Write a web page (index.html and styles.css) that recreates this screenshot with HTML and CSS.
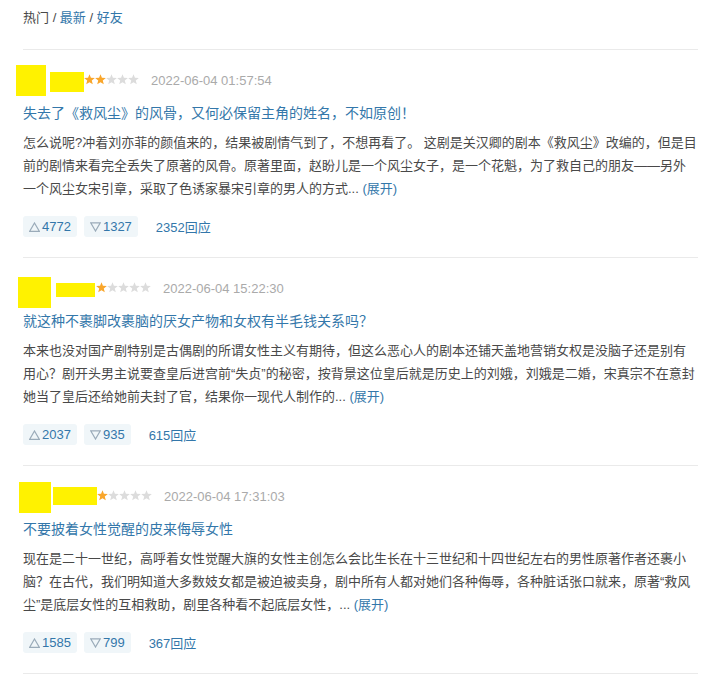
FILE: index.html
```html
<!DOCTYPE html>
<html lang="zh-CN">
<head>
  <meta charset="UTF-8">
  <title>剧评</title>
  <link rel="stylesheet" href="styles.css">
</head>
<body>
  <svg class="defs" width="0" height="0">
    <defs>
      <polygon id="star" points="5.5,0.2 6.91,3.86 10.83,4.07 7.78,6.54 8.79,10.33 5.5,8.2 2.21,10.33 3.22,6.54 0.17,4.07 4.09,3.86"/>
    </defs>
  </svg>

  <div class="page">
    <div class="tabs">
      <span class="tab-on">热门</span> / <a href="#">最新</a> / <a href="#">好友</a>
    </div>

    <div class="review r1">
      <div class="review-hd">
        <span class="mask avatar"></span>
        <span class="mask name"></span>
        <svg class="stars" width="55" height="11" viewBox="0 0 55 11">
          <use href="#star" x="0" class="on"/>
          <use href="#star" x="11" class="on"/>
          <use href="#star" x="22"/>
          <use href="#star" x="33"/>
          <use href="#star" x="44"/>
        </svg>
        <span class="time">2022-06-04 01:57:54</span>
      </div>
      <h3 class="review-title"><a href="#">失去了《救风尘》的风骨，又何必保留主角的姓名，不如原创！</a></h3>
      <p class="review-body">怎么说呢?冲着刘亦菲的颜值来的，结果被剧情气到了，不想再看了。 这剧是关汉卿的剧本《救风尘》改编的，但是目前的剧情来看完全丢失了原著的风骨。原著里面，赵盼儿是一个风尘女子，是一个花魁，为了救自己的朋友——另外一个风尘女宋引章，采取了色诱家暴宋引章的男人的方式... <a class="unfold" href="#">(展开)</a></p>
      <div class="actions">
        <button type="button" class="vote"><svg width="11" height="10" viewBox="0 0 11 10"><polygon points="5.5,1 10.3,9.3 0.7,9.3"/></svg>4772</button>
        <button type="button" class="vote"><svg width="11" height="10" viewBox="0 0 11 10"><polygon points="0.7,0.8 10.3,0.8 5.5,9"/></svg>1327</button>
        <a class="reply" href="#">2352回应</a>
      </div>
    </div>

    <div class="review r2">
      <div class="review-hd">
        <span class="mask avatar"></span>
        <span class="mask name"></span>
        <svg class="stars" width="55" height="11" viewBox="0 0 55 11">
          <use href="#star" x="0" class="on"/>
          <use href="#star" x="11"/>
          <use href="#star" x="22"/>
          <use href="#star" x="33"/>
          <use href="#star" x="44"/>
        </svg>
        <span class="time">2022-06-04 15:22:30</span>
      </div>
      <h3 class="review-title"><a href="#">就这种不裹脚改裹脑的厌女产物和女权有半毛钱关系吗？</a></h3>
      <p class="review-body">本来也没对国产剧特别是古偶剧的所谓女性主义有期待，但这么恶心人的剧本还铺天盖地营销女权是没脑子还是别有用心？剧开头男主说要查皇后进宫前“失贞”的秘密，按背景这位皇后就是历史上的刘娥，刘娥是二婚，宋真宗不在意封她当了皇后还给她前夫封了官，结果你一现代人制作的... <a class="unfold" href="#">(展开)</a></p>
      <div class="actions">
        <button type="button" class="vote"><svg width="11" height="10" viewBox="0 0 11 10"><polygon points="5.5,1 10.3,9.3 0.7,9.3"/></svg>2037</button>
        <button type="button" class="vote"><svg width="11" height="10" viewBox="0 0 11 10"><polygon points="0.7,0.8 10.3,0.8 5.5,9"/></svg>935</button>
        <a class="reply" href="#">615回应</a>
      </div>
    </div>

    <div class="review r3">
      <div class="review-hd">
        <span class="mask avatar"></span>
        <span class="mask name"></span>
        <svg class="stars" width="55" height="11" viewBox="0 0 55 11">
          <use href="#star" x="0" class="on"/>
          <use href="#star" x="11"/>
          <use href="#star" x="22"/>
          <use href="#star" x="33"/>
          <use href="#star" x="44"/>
        </svg>
        <span class="time">2022-06-04 17:31:03</span>
      </div>
      <h3 class="review-title"><a href="#">不要披着女性觉醒的皮来侮辱女性</a></h3>
      <p class="review-body">现在是二十一世纪，高呼着女性觉醒大旗的女性主创怎么会比生长在十三世纪和十四世纪左右的男性原著作者还裹小脑？在古代，我们明知道大多数妓女都是被迫被卖身，剧中所有人都对她们各种侮辱，各种脏话张口就来，原著“救风尘”是底层女性的互相救助，剧里各种看不起底层女性，... <a class="unfold" href="#">(展开)</a></p>
      <div class="actions">
        <button type="button" class="vote"><svg width="11" height="10" viewBox="0 0 11 10"><polygon points="5.5,1 10.3,9.3 0.7,9.3"/></svg>1585</button>
        <button type="button" class="vote"><svg width="11" height="10" viewBox="0 0 11 10"><polygon points="0.7,0.8 10.3,0.8 5.5,9"/></svg>799</button>
        <a class="reply" href="#">367回应</a>
      </div>
    </div>
  </div>
</body>
</html>
```

FILE: styles.css
```css
* {
  box-sizing: border-box;
}

body {
  margin: 0;
  background-color: #fff;
  color: #494949;
  font-family: "Liberation Sans", "Noto Sans CJK SC", sans-serif;
  font-size: 13px;
}

a {
  color: #3377aa;
  text-decoration: none;
}

.defs {
  position: absolute;
}

.page {
  width: 698px;
  padding-left: 23px;
}

.tabs {
  padding: 9px 0 22px;
  line-height: 18px;
  border-bottom: 1px solid #eaeaea;
}

.tab-on {
  color: #494949;
}

.review {
  padding: 14px 0 20px;
  border-bottom: 1px solid #eaeaea;
}

.review-hd {
  display: flex;
  align-items: center;
  height: 32px;
}

.mask {
  background-color: #fff200;
  flex: none;
}

.avatar {
  width: 30px;
  height: 31px;
  margin-left: -7px;
}

.name {
  width: 34px;
  height: 20px;
  margin-left: 4px;
  margin-top: 3px;
}

.r2 .avatar {
  width: 33px;
  margin-left: -5px;
  margin-top: 8px;
}

.r2 .name {
  width: 39px;
  height: 14px;
  margin-left: 5px;
  margin-top: 4px;
}

.r2 .stars {
  margin-left: 1px;
}

.r3 .avatar {
  width: 32px;
  margin-left: -4px;
  margin-top: 2px;
}

.r3 .name {
  width: 44px;
  height: 18px;
  margin-left: 2px;
  margin-top: -1px;
}

.stars {
  flex: none;
  fill: #dcdcdc;
  margin-top: -2px;
}

.stars .on {
  fill: #f9a62b;
}

.time {
  margin-left: 12px;
  color: #aaa;
  font-size: 13px;
}

.review-title {
  margin: 7px 0 0;
  font-size: 14px;
  font-weight: normal;
  line-height: 20px;
}

.review-body {
  margin: 8px 0 0;
  line-height: 23px;
}

.actions {
  display: flex;
  align-items: center;
  gap: 7px;
  margin-top: 16px;
}

.vote {
  display: flex;
  align-items: center;
  gap: 2px;
  height: 21px;
  padding: 0 6px;
  border: none;
  border-radius: 3px;
  background-color: #f0f6f9;
  color: #3377aa;
  font-family: inherit;
  font-size: 13px;
  cursor: pointer;
}

.vote svg {
  fill: none;
  stroke: #9aabb9;
  stroke-width: 1.2;
}

.reply {
  margin-left: 11px;
}
```
